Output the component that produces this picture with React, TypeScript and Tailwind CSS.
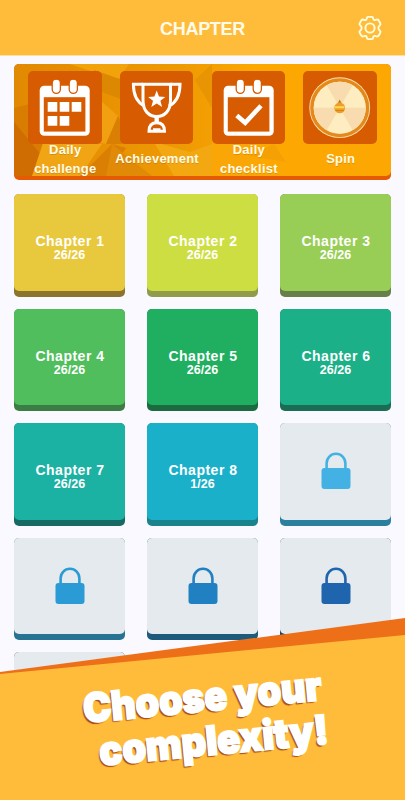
import React from 'react';

interface Chapter {
  id: number;
  face: string;
  edge: string;
  progress?: string;
  lock?: string;
}

const chapters: Chapter[] = [
  { id: 1, face: 'bg-[#e8c93e]', edge: 'bg-[#8a742e]', progress: '26/26' },
  { id: 2, face: 'bg-[#cdde42]', edge: 'bg-[#919b4c]', progress: '26/26' },
  { id: 3, face: 'bg-[#98cd56]', edge: 'bg-[#678049]', progress: '26/26' },
  { id: 4, face: 'bg-[#50be5c]', edge: 'bg-[#3c7c45]', progress: '26/26' },
  { id: 5, face: 'bg-[#20af60]', edge: 'bg-[#1c6b40]', progress: '26/26' },
  { id: 6, face: 'bg-[#1bb087]', edge: 'bg-[#1a6c55]', progress: '26/26' },
  { id: 7, face: 'bg-[#1bb1a3]', edge: 'bg-[#176a63]', progress: '26/26' },
  { id: 8, face: 'bg-[#1ab0c9]', edge: 'bg-[#1a828b]', progress: '1/26' },
  { id: 9, face: 'bg-[#e4eaed]', edge: 'bg-[#2b7f9f]', lock: '#44b1e5' },
  { id: 10, face: 'bg-[#e4eaed]', edge: 'bg-[#277394]', lock: '#2b9bd5' },
  { id: 11, face: 'bg-[#e4eaed]', edge: 'bg-[#1d5a7b]', lock: '#2180c2' },
  { id: 12, face: 'bg-[#e4eaed]', edge: 'bg-[#174669]', lock: '#1e65ad' },
  { id: 13, face: 'bg-[#e4eaed]', edge: 'bg-[#174669]' },
];

const SettingsIcon = () => (
  <svg width="26" height="26" viewBox="0 0 26 26" fill="none" stroke="#fffde0" strokeWidth="1.9" strokeLinejoin="round">
    <path d="M11.2 1.9H14.8Q16 1.9 16.2 3.4Q16.6 5.6 18.6 5Q20.8 4 21.7 5.4L23.3 8.2Q24 9.4 22.7 10.4Q20 13 22.7 15.6Q24 16.6 23.3 17.8L21.7 20.6Q20.8 22 18.6 21Q16.6 20.4 16.2 22.6Q16 24.1 14.8 24.1H11.2Q10 24.1 9.8 22.6Q9.4 20.4 7.4 21Q5.2 22 4.3 20.6L2.7 17.8Q2 16.6 3.3 15.6Q6 13 3.3 10.4Q2 9.4 2.7 8.2L4.3 5.4Q5.2 4 7.4 5Q9.4 5.6 9.8 3.4Q10 1.9 11.2 1.9Z" />
    <circle cx="13" cy="13" r="4.6" />
  </svg>
);

const Calendar = ({ children }: { children: React.ReactNode }) => (
  <svg width="73" height="73" viewBox="0 0 73 73">
    <rect x="11.7" y="14.7" width="50" height="50" rx="4.5" fill="#fff" />
    <rect x="15.8" y="26.2" width="41.6" height="34.4" fill="#d75b00" />
    <rect x="24.2" y="8.2" width="8.2" height="14.2" rx="4.1" fill="#fff" stroke="#d75b00" strokeWidth="1.3" />
    <rect x="41.2" y="8.2" width="8.2" height="14.2" rx="4.1" fill="#fff" stroke="#d75b00" strokeWidth="1.3" />
    {children}
  </svg>
);

const ChallengeIcon = () => (
  <Calendar>
    <path fill="#fff" d="M19.7 31h9.6v9.8h-9.6zM31.7 31h9.6v9.8h-9.6zM43.7 31h9.6v9.8h-9.6zM19.7 45h9.6v9.8h-9.6zM31.7 45h9.6v9.8h-9.6z" />
  </Calendar>
);

const ChecklistIcon = () => (
  <Calendar>
    <path d="M24.8 44.5L33.2 51.8L49 34.8" fill="none" stroke="#fff" strokeWidth="4.6" />
  </Calendar>
);

const TrophyIcon = () => (
  <svg width="73" height="73" viewBox="0 0 73 73" fill="none" stroke="#fff" strokeWidth="3">
    <path d="M23 13.2H50.5V29C50.5 40 44.5 45.5 36.7 45.5C29 45.5 23 40 23 29Z" />
    <path d="M23 13.2H13.4C13.4 24 16.5 31 24.5 35M50.5 13.2H60C60 24 57 31 49 35" />
    <path d="M36.7 45V51" strokeWidth="4.4" />
    <path d="M29 60.2C29 54.5 32 51.8 36.7 51.8C41.5 51.8 44.5 54.5 44.5 60.2Z" />
    <path d="M33 58.4H40.5" strokeWidth="2.5" />
    <path fill="#fff" stroke="none" d="M36.7 19.5L39 25.6L45.3 25.9L40.4 29.8L42.1 36L36.7 32.5L31.3 36L33 29.8L28.1 25.9L34.4 25.6Z" />
  </svg>
);

const SpinIcon = () => (
  <svg width="73" height="73" viewBox="0 0 73 73">
    <circle cx="36.7" cy="36.7" r="30.4" fill="#fbe3ae" />
    <circle cx="36.7" cy="36.7" r="27.7" fill="none" stroke="#e48a1c" strokeWidth="3.6" />
    <circle cx="36.7" cy="36.7" r="26" fill="#fdedc0" />
    <g fill="#f8dcaf">
      <path d="M36.7 36.7L23.7 14.2A26 26 0 0 1 49.7 14.2Z" />
      <path d="M36.7 36.7L62.7 36.7A26 26 0 0 1 49.7 59.2Z" />
      <path d="M36.7 36.7L23.7 59.2A26 26 0 0 1 10.7 36.7Z" />
    </g>
    <path d="M36.7 28.5L39 33H34.4Z" fill="#c87518" />
    <circle cx="36.7" cy="36.9" r="5.4" fill="#eda029" />
    <path d="M32 36.2H41.4" stroke="#ffda50" strokeWidth="2" />
    <path d="M32.4 39.6H41" stroke="#d97f16" strokeWidth="1" />
  </svg>
);

const LockIcon = ({ color }: { color: string }) => (
  <svg width="30" height="38" viewBox="0 0 30 38">
    <path d="M5.6 17V11.5A9.4 9.8 0 0 1 24.4 11.5V17" fill="none" stroke={color} strokeWidth="2.6" />
    <rect x="0.5" y="16" width="29" height="21" rx="3" fill={color} />
  </svg>
);

const shortcuts = [
  { label: ['Daily', 'challenge'], icon: <ChallengeIcon /> },
  { label: ['Achievement'], icon: <TrophyIcon /> },
  { label: ['Daily', 'checklist'], icon: <ChecklistIcon /> },
  { label: ['Spin'], icon: <SpinIcon /> },
];

// Faceted background behind the shortcut buttons
const Facets = () => (
  <svg className="absolute inset-0" width="377" height="112" viewBox="0 0 377 112">
    <path fill="#d87c02" d="M0 44L16 40L30 85L18 112H0Z" />
    <path fill="#cf6c02" d="M0 58L28 92L18 112H0Z" />
    <path fill="#f2a20a" d="M55 0H115L104 16L80 8Z" />
    <path fill="#dd8802" d="M80 6L120 20V40L88 28Z" />
    <path fill="#f0a010" d="M86 36L104 52L92 80L84 78Z" />
    <path fill="#d98004" d="M104 52L120 80H92Z" />
    <path fill="#f1a514" d="M30 76L88 80L66 112H18Z" />
    <path fill="#da7e04" d="M98 80L66 112H94L112 84Z" />
    <path fill="#e08a08" d="M98 80L138 112H92Z" />
    <path fill="#f3a812" d="M140 78L176 88L198 80V112H160Z" />
    <path fill="#e89403" d="M181 16L198 0V44Z" />
    <path fill="#f9a606" d="M198 70L240 80L232 112H198Z" />
    <path fill="#f5a004" d="M260 80L272 98L236 92Z" />
  </svg>
);

const ChapterTile = ({ chapter }: { chapter: Chapter }) => (
  <div className={`h-[102.6px] rounded-[5px] pb-1.5 ${chapter.edge}`}>
    <div className={`flex h-full flex-col items-center justify-center rounded-[5px] text-white ${chapter.face}`}>
      {chapter.progress && (
        <>
          <p className="mt-2.5 pl-px text-sm leading-4 tracking-[0.5px]">Chapter {chapter.id}</p>
          <p className="text-[12.5px] leading-3">{chapter.progress}</p>
        </>
      )}
      {chapter.lock && <LockIcon color={chapter.lock} />}
    </div>
  </div>
);

const App: React.FC = () => {
  return (
    <div className="relative h-[800px] w-[405px] overflow-hidden bg-[#faf9ff] font-['Liberation_Sans',Arial,sans-serif] font-bold">
      <header className="grid h-14 grid-cols-3 items-center border-b border-[#ffdf9c] bg-[#ffbc3b] text-[#fffbea]">
        <h1 className="col-start-2 pt-0.5 text-center text-lg tracking-[-0.3px]">CHAPTER</h1>
        <button className="mr-[22px] justify-self-end">
          <SettingsIcon />
        </button>
      </header>

      <main className="px-3.5 pt-2">
        <section className="h-[116px] rounded-[5px] bg-[#e65a03] pb-1">
          <div className="relative h-full overflow-hidden rounded-[5px] bg-linear-to-r from-[#e18902] via-[#ee9a03] via-45% to-[#fda802] to-65%">
            <Facets />
            <div className="relative flex justify-between px-3.5 pt-[6.5px]">
              {shortcuts.map((item) => (
                <div key={item.label.join('-')} className="flex w-[73.5px] flex-col items-center">
                  <div className="h-[73.5px] w-[73.5px] rounded-[5px] bg-[#d75b00]">{item.icon}</div>
                  <div className="flex h-[31px] flex-col justify-center pl-px text-[13px] leading-[18.5px] tracking-[0.25px] whitespace-nowrap text-[#fffbe6]">
                    {item.label.map((line) => (
                      <span key={line} className="text-center text-shadow-2xs">{line}</span>
                    ))}
                  </div>
                </div>
              ))}
            </div>
          </div>
        </section>

        <section className="mt-3.5 grid grid-cols-3 gap-x-[22px] gap-y-3">
          {chapters.map((chapter) => (
            <ChapterTile key={chapter.id} chapter={chapter} />
          ))}
        </section>
      </main>

      {/* Slanted banner over the bottom of the list */}
      <div className="absolute inset-x-0 bottom-0 h-[182px]">
        <div className="absolute inset-0 bg-[#ed7019] [clip-path:polygon(0_54px,100%_0,100%_100%,0_100%)]" />
        <div className="absolute inset-0 bg-[#ffbc3b] [clip-path:polygon(0_56px,100%_17px,100%_100%,0_100%)]" />
        <div className="absolute top-[69px] left-[81px] origin-top-left rotate-[-5.5deg] font-['Inter',sans-serif] text-[40px] leading-[44px] font-black whitespace-nowrap text-white [text-shadow:-1px_1px_0_#a94b13,-2px_2px_1px_#a94b13] [-webkit-text-stroke:2px_white]">
          <p className="origin-left scale-x-[0.94]">Choose your</p>
          <p className="ml-3 origin-left scale-x-[0.95]">complexity!</p>
        </div>
      </div>
    </div>
  );
};

export default App;
